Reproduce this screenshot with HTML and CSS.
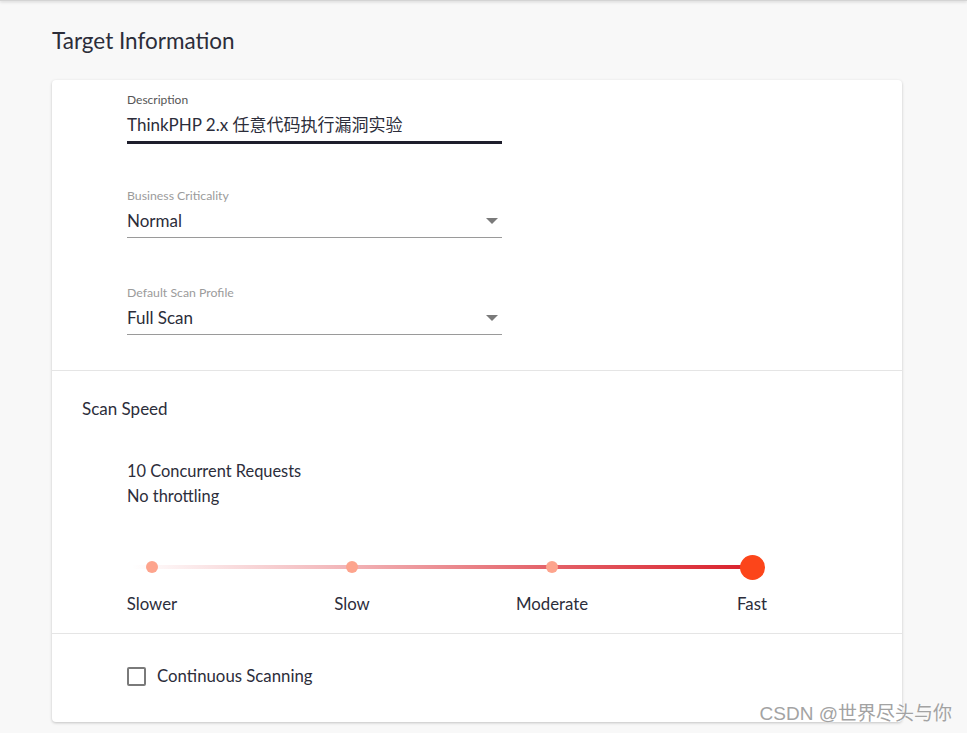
FILE: index.html
```html
<!DOCTYPE html>
<html lang="en">
<head>
<meta charset="utf-8">
<title>Target Information</title>
<link rel="stylesheet" href="styles.css">
</head>
<body>
<div class="topbar"></div>
<main class="page">
  <h2 class="page-title">Target Information</h2>
  <div class="card">
    <section class="fields">
      <div class="field focused">
        <div class="field-label">Description</div>
        <div class="field-value">ThinkPHP 2.x 任意代码执行漏洞实验</div>
      </div>
      <div class="field select">
        <div class="field-label muted">Business Criticality</div>
        <div class="field-value">
          <span>Normal</span>
          <svg class="caret" width="12" height="6" viewBox="0 0 12 6"><path d="M0 0h12L6 6z" fill="#7a7a7a"/></svg>
        </div>
      </div>
      <div class="field select">
        <div class="field-label muted">Default Scan Profile</div>
        <div class="field-value">
          <span>Full Scan</span>
          <svg class="caret" width="12" height="6" viewBox="0 0 12 6"><path d="M0 0h12L6 6z" fill="#7a7a7a"/></svg>
        </div>
      </div>
    </section>
    <section class="speed">
      <h3 class="speed-title">Scan Speed</h3>
      <div class="speed-info">
        <div>10 Concurrent Requests</div>
        <div>No throttling</div>
      </div>
      <div class="slider">
        <div class="stops">
          <div class="stop"><span class="dot"></span></div>
          <div class="stop"><span class="dot"></span></div>
          <div class="stop"><span class="dot"></span></div>
          <div class="stop"><span class="thumb"></span></div>
        </div>
        <div class="stop-labels">
          <span>Slower</span>
          <span>Slow</span>
          <span>Moderate</span>
          <span>Fast</span>
        </div>
      </div>
    </section>
    <section class="continuous">
      <label class="check">
        <span class="box"></span>
        <span>Continuous Scanning</span>
      </label>
    </section>
  </div>
</main>
<div class="watermark">CSDN @世界尽头与你</div>
</body>
</html>
```
FILE: styles.css
```css
html, body {
  margin: 0;
  padding: 0;
}
body {
  background: #f8f8f8;
  font-family: "Lato", "Noto Sans CJK SC", sans-serif;
  color: #2c2d3a;
  min-height: 733px;
  position: relative;
  overflow: hidden;
}
.topbar {
  height: 1px;
  background: #d4d4d4;
  box-shadow: 0 1px 3px rgba(0, 0, 0, 0.25);
}
.page {
  padding: 25px 0 0 52px;
  width: 850px;
}
.page-title {
  margin: 0;
  font-size: 22.5px;
  line-height: 29px;
  font-weight: 400;
  color: #2c2d3a;
}
.card {
  margin-top: 25px;
  background: #fff;
  border-radius: 4px;
  box-shadow: 0 1px 3px rgba(0, 0, 0, 0.22);
}
.fields {
  padding: 12px 0 35px 75px;
  display: flex;
  flex-direction: column;
  border-bottom: 1px solid #e5e5e5;
}
.field {
  width: 375px;
  border-bottom: 1px solid #9a9a9a;
  padding-bottom: 4px;
}
.field + .field {
  margin-top: 47px;
}
.field.focused + .field {
  margin-top: 46px;
}
.field.focused {
  border-bottom-color: #1e1e2c;
  box-shadow: 0 2px 0 #1e1e2c;
}
.field-label {
  font-size: 12px;
  line-height: 16px;
  color: #555;
}
.field-label.muted {
  color: #9b9b9b;
  font-size: 12.3px;
}
.field-value {
  margin-top: 5px;
  font-size: 17px;
  line-height: 24px;
  display: flex;
  align-items: center;
  justify-content: space-between;
}
.caret {
  margin-right: 4px;
}
.speed {
  padding: 26px 0 17px 0;
  border-bottom: 1px solid #e5e5e5;
}
.speed-title {
  margin: 0 0 0 30px;
  font-size: 17px;
  line-height: 24px;
  font-weight: 400;
}
.speed-info {
  margin: 37px 0 0 75px;
  font-size: 16.4px;
  line-height: 25px;
}
.slider {
  margin-top: 46px;
  width: 800px;
}
.stops {
  position: relative;
  display: grid;
  grid-template-columns: repeat(4, 200px);
  height: 26px;
  align-items: center;
}
.stops::before {
  content: "";
  position: absolute;
  left: 80px;
  width: 621px;
  top: 11px;
  height: 4px;
  background: linear-gradient(to right, rgba(217, 38, 47, 0) 0%, rgba(217, 38, 47, 0.35) 35%, rgba(217, 38, 47, 0.7) 65%, #d9202b 100%);
}
.stop {
  display: flex;
  justify-content: center;
  align-items: center;
  position: relative;
}
.dot {
  width: 12px;
  height: 12px;
  border-radius: 50%;
  background: #fda48d;
}
.thumb {
  width: 25px;
  height: 25px;
  border-radius: 50%;
  background: #fc451a;
}
.stop-labels {
  margin-top: 12px;
  display: grid;
  grid-template-columns: repeat(4, 200px);
  text-align: center;
  font-size: 16.8px;
  line-height: 24px;
}
.continuous {
  padding: 30px 0 34px 75px;
}
.check {
  display: flex;
  align-items: center;
  gap: 11px;
  font-size: 16.8px;
  line-height: 24px;
}
.box {
  width: 15px;
  height: 15px;
  border: 2px solid #7a7a7a;
  border-radius: 2px;
}
.watermark {
  position: absolute;
  right: 15px;
  bottom: 8px;
  font-family: "Liberation Sans", "Noto Sans CJK SC", sans-serif;
  font-size: 19px;
  line-height: 22px;
  color: #a3a3a3;
  text-shadow: 0 0 2px #fff;
}
```
